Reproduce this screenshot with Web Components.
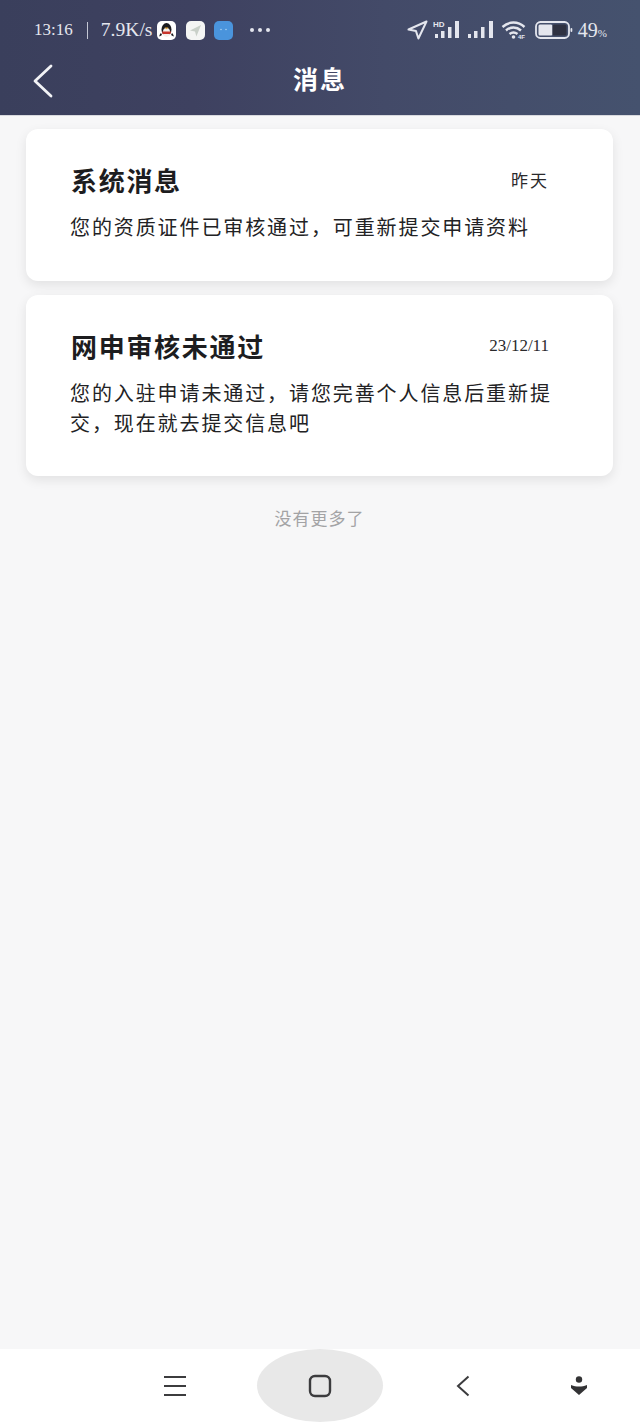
<!DOCTYPE html>
<html lang="zh">
<head>
<meta charset="utf-8">
<title>消息</title>
<style>
  html, body { margin: 0; height: 100%; }
  body {
    display: flex;
    flex-direction: column;
    height: 1422px;
    overflow: hidden;
    background: #f7f7f8;
    font-family: "Noto Sans CJK SC", "Liberation Serif", sans-serif;
  }
</style>
</head>
<body>
<app-header title="消息"></app-header>
<message-list>
  <message-card heading="系统消息" time="昨天" style="--time-spacing: 2px">您的资质证件已审核通过，可重新提交申请资料</message-card>
  <message-card heading="网申审核未通过" time="23/12/11">您的入驻申请未通过，请您完善个人信息后重新提交，现在就去提交信息吧</message-card>
</message-list>
<nav-bar></nav-bar>

<script>
class StatusBar extends HTMLElement {
  constructor() {
    super();
    this.attachShadow({ mode: 'open' });
    this.shadowRoot.innerHTML = `
      <style>
        :host {
          display: flex;
          align-items: center;
          height: 60px;
          padding: 0 33px 0 34px;
          color: #e4e6ee;
          font: 17px "Liberation Serif", serif;
        }
        .left, .right { display: flex; align-items: center; }
        .right { margin-left: auto; }
        .sep { width: 1px; height: 17px; background: #c4c7d4; margin: 0 13px 0 14px; }
        .speed { font-size: 19.600px; }
        .app { width: 19px; height: 19px; margin-left: 10px; display: block; }
        .speed + .app { margin-left: 5px; }
        .dots { margin-left: 17px; display: flex; gap: 4px; }
        .dots i { width: 4px; height: 4px; border-radius: 50%; background: #e4e6ee; }
        svg { display: block; }
        .pct { font-size: 20px; margin-left: 5px; }
        .pct small { font-size: 11px; }
      </style>
      <div class="left">
        <span>13:16</span><span class="sep"></span><span class="speed">7.9K/s</span>
        <svg class="app" viewBox="0 0 19 19">
          <rect width="19" height="19" rx="5" fill="#fff"/>
          <ellipse cx="9.500" cy="8.500" rx="5" ry="6.500" fill="#1b1b1f"/>
          <ellipse cx="9.500" cy="11.500" rx="3.600" ry="4.400" fill="#f4f0ec"/>
          <path d="M5 10.500h9l-.6 2.400H5.600z" fill="#c8352c"/>
          <path d="M7.500 6.500h4l-2 1.800z" fill="#e8a32c"/>
          <path d="M4 12c-1.500 1.500-2 3-1.500 3.500L5 14zM15 12c1.500 1.500 2 3 1.500 3.500L14 14z" fill="#1b1b1f"/>
        </svg>
        <svg class="app" viewBox="0 0 19 19">
          <rect width="19" height="19" rx="5" fill="#f4f5f4"/>
          <path d="M15 4 4 9.400l5 1.200 1.400 5z" fill="#c9d0c9"/>
        </svg>
        <svg class="app" style="margin-left:9px" viewBox="0 0 19 19">
          <rect width="19" height="19" rx="5" fill="#4a94dc"/>
          <circle cx="7" cy="8.500" r=".8" fill="#a9d0f2"/>
          <circle cx="12" cy="8.500" r=".8" fill="#a9d0f2"/>
        </svg>
        <span class="dots"><i></i><i></i><i></i></span>
      </div>
      <div class="right">
        <svg width="21" height="20" viewBox="0 0 21 20" fill="none" stroke="#e4e6ee" stroke-width="2" stroke-linejoin="round">
          <path d="M19.500 1.500 1.500 9.500l7.500 1.600 2.400 7.400z"/>
        </svg>
        <svg width="28" height="20" viewBox="0 0 28 20" style="margin-left:5px" fill="#e4e6ee">
          <text x="0" y="7" font-family="Liberation Sans" font-size="8" font-weight="700">HD</text>
          <rect x="2" y="14" width="3" height="4"/><rect x="8" y="11" width="3.500" height="7"/>
          <rect x="15" y="7" width="3.500" height="11"/><rect x="22" y="1" width="4" height="17"/>
        </svg>
        <svg width="28" height="20" viewBox="0 0 28 20" style="margin-left:6px" fill="#e4e6ee">
          <rect x="1" y="14" width="3" height="4"/><rect x="7" y="11" width="3.500" height="7"/>
          <rect x="14" y="7" width="3.500" height="11"/><rect x="22" y="1" width="4" height="17"/>
        </svg>
        <svg width="26" height="20" viewBox="0 0 26 20" style="margin-left:6px" fill="none" stroke="#e4e6ee" stroke-width="2.400">
          <path d="M1.500 7C8 1 17 1 23.500 7"/>
          <path d="M5 10.500c4.500-4 10.500-4 15 0"/>
          <path d="M8.500 14c2.500-2 5.500-2 8 0"/>
          <circle cx="12.500" cy="17" r="1.800" fill="#e4e6ee" stroke="none"/>
          <text x="17" y="19" font-family="Liberation Sans" font-size="6" font-weight="700" fill="#e4e6ee" stroke="none">4F</text>
        </svg>
        <svg width="38" height="18" viewBox="0 0 38 18" style="margin-left:8px">
          <rect x="1" y="1" width="33" height="16" rx="4.500" fill="none" stroke="#e4e6ee" stroke-width="1.800"/>
          <rect x="3.500" y="3.500" width="14" height="11" rx="1.500" fill="#e4e6ee"/>
          <rect x="17.500" y="3.500" width="14" height="11" rx="1.500" fill="#2f3242"/>
          <rect x="35.500" y="7" width="1.800" height="4" rx=".9" fill="#e4e6ee"/>
        </svg>
        <span class="pct">49<small>%</small></span>
      </div>
    `;
  }
}
customElements.define('status-bar', StatusBar);

class AppHeader extends HTMLElement {
  constructor() {
    super();
    this.attachShadow({ mode: 'open' });
    this.shadowRoot.innerHTML = `
      <style>
        :host {
          display: block;
          flex: none;
          height: 115px;
          background: linear-gradient(90deg, #3a3f5c 0%, #3e4160 30%, #434a68 60%, #45526e 100%);
          border-bottom: 1px solid #d8d9de;
        }
        .bar {
          display: flex;
          align-items: center;
          justify-content: center;
          position: relative;
          height: 38px;
          padding-bottom: 4px;
          margin-top: -1px;
          color: #fff;
          font-size: 25px;
          font-weight: 700;
          letter-spacing: 2px;
        }
        svg { position: absolute; left: 32px; top: 5px; }
      </style>
      <status-bar></status-bar>
      <div class="bar">
        <svg width="22" height="34" viewBox="0 0 22 34" fill="none" stroke="#f2f3f6" stroke-width="2.800" stroke-linecap="round" stroke-linejoin="round">
          <path d="M19 2 3 17l16 15"/>
        </svg>
        <span id="title"></span>
      </div>
    `;
  }

  connectedCallback() {
    this.shadowRoot.querySelector('#title').textContent = this.getAttribute('title');
  }
}
customElements.define('app-header', AppHeader);

class MessageList extends HTMLElement {
  constructor() {
    super();
    this.attachShadow({ mode: 'open' });
    this.shadowRoot.innerHTML = `
      <style>
        :host {
          display: flex;
          flex-direction: column;
          flex: 1;
          gap: 14px;
          padding: 13px 27px 0 26px;
        }
        .end {
          text-align: center;
          margin-top: 15px;
          color: #a3a3a5;
          font-size: 17px;
          line-height: 26px;
          letter-spacing: 1px;
        }
      </style>
      <slot></slot>
      <div class="end">没有更多了</div>
    `;
  }
}
customElements.define('message-list', MessageList);

class MessageCard extends HTMLElement {
  constructor() {
    super();
    this.attachShadow({ mode: 'open' });
    this.shadowRoot.innerHTML = `
      <style>
        :host {
          display: block;
          box-sizing: border-box;
          padding: 32px 64px 38px 44px;
          min-height: 152px;
          background: #fff;
          border-radius: 12px;
          box-shadow: 0 4px 12px rgba(0, 0, 0, .09);
        }
        .top { display: flex; align-items: center; justify-content: space-between; }
        h2 {
          margin: 0 0 0 1px;
          color: #1d1d1f;
          font-size: 26px;
          line-height: 37px;
          font-weight: 700;
          letter-spacing: 1.700px;
        }
        time {
          color: #2a2a2c;
          font-size: 17px;
          letter-spacing: var(--time-spacing, 0);
          font-family: "Liberation Serif", "Noto Sans CJK SC", serif;
        }
        p {
          margin: 14px -8px 0 0;
          color: #222224;
          font-size: 20px;
          line-height: 30px;
          letter-spacing: 1.900px;
        }
      </style>
      <div class="top"><h2 id="heading"></h2><time id="time"></time></div>
      <p><slot></slot></p>
    `;
  }

  connectedCallback() {
    this.shadowRoot.querySelector('#heading').textContent = this.getAttribute('heading');
    this.shadowRoot.querySelector('#time').textContent = this.getAttribute('time');
  }
}
customElements.define('message-card', MessageCard);

class NavBar extends HTMLElement {
  constructor() {
    super();
    this.attachShadow({ mode: 'open' });
    this.shadowRoot.innerHTML = `
      <style>
        :host {
          display: grid;
          grid-template-columns: 130px 160px 126px 106px;
          flex: none;
          align-items: center;
          justify-items: center;
          height: 73px;
          padding-left: 110px;
          box-sizing: border-box;
          background: #fff;
        }
        .pill {
          display: flex;
          align-items: center;
          justify-content: center;
          width: 126px;
          height: 73px;
          border-radius: 50%;
          background: #e8e8e8;
        }
        svg { display: block; }
      </style>
      <svg width="22" height="20" viewBox="0 0 22 20" fill="none" stroke="#3c3c3e" stroke-width="2">
        <path d="M0 1h22M0 10h22M0 19h22"/>
      </svg>
      <div class="pill">
        <svg width="24" height="24" viewBox="0 0 24 24" fill="none" stroke="#3c3c3e" stroke-width="2.400">
          <rect x="2" y="2" width="20" height="20" rx="5"/>
        </svg>
      </div>
      <svg width="14" height="22" viewBox="0 0 14 22" fill="none" stroke="#3c3c3e" stroke-width="2">
        <path d="M12.500 1.500 2 11l10.500 9.500"/>
      </svg>
      <svg width="18" height="20" viewBox="0 0 18 20" fill="#333335">
        <circle cx="9" cy="3.500" r="3.200"/>
        <path d="M1 9c3 1 5 1.500 8 1.500S14 10 17 9v3l-8 7-8-7z"/>
      </svg>
    `;
  }
}
customElements.define('nav-bar', NavBar);
</script>
</body>
</html>
